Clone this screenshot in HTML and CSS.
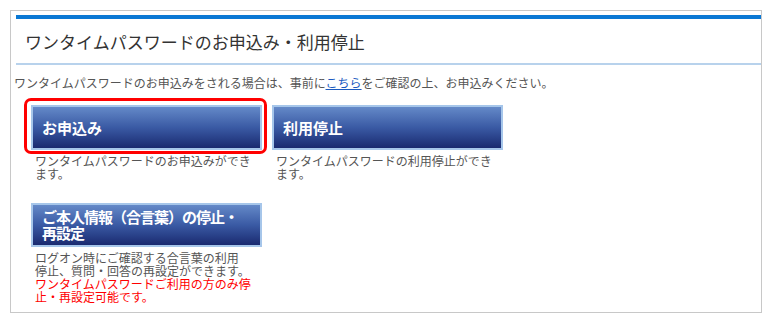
FILE: index.html
```html
<!DOCTYPE html>
<html lang="ja">
<head>
  <meta charset="UTF-8" />
  <title>ワンタイムパスワードのお申込み・利用停止</title>
  <link rel="stylesheet" href="styles.css">
</head>
<body>

<div class="panel">
  <div class="panel-head">
    <h2>ワンタイムパスワードのお申込み・利用停止</h2>
  </div>

  <p class="lead">ワンタイムパスワードのお申込みをされる場合は、事前に<a href="#">こちら</a>をご確認の上、お申込みください。</p>

  <div class="menu">
    <div class="menu-item">
      <a class="menu-btn selected" href="#">お申込み</a>
      <p class="menu-desc">ワンタイムパスワードのお申込みができます。</p>
    </div>
    <div class="menu-item">
      <a class="menu-btn" href="#">利用停止</a>
      <p class="menu-desc">ワンタイムパスワードの利用停止ができます。</p>
    </div>
    <div class="menu-item">
      <a class="menu-btn multi" href="#">ご本人情報（合言葉）の停止・<br>再設定</a>
      <p class="menu-desc">ログオン時にご確認する合言葉の利用<br>停止、質問・回答の再設定ができます。<span class="note">ワンタイムパスワードご利用の方のみ停<br>止・再設定可能です。</span></p>
    </div>
  </div>
</div>

</body>
</html>
```

FILE: styles.css
```css
body {
  margin: 0;
  font-family: "Noto Sans CJK JP", "Noto Sans", sans-serif;
  background: #fff;
  color: #333;
}
.panel {
  margin: 10px 0 0 10px;
  width: 752px;
  height: 303px;
  box-sizing: border-box;
  border: 1px solid #c8c8c8;
  padding: 4px 0 0 3px;
}
.panel-head {
  margin-left: 2px;
  height: 50px;
  box-sizing: border-box;
  border-top: 4px solid #0a78d4;
  border-bottom: 2px solid #b8d2ec;
  display: flex;
  align-items: center;
  padding-left: 9px;
}
.panel-head h2 {
  margin: 0;
  font-size: 17px;
  font-weight: normal;
  color: #333;
}
.lead {
  margin: 11px 0 0;
  font-size: 12px;
  line-height: 13px;
  color: #555;
}
.lead a {
  color: #1d5bbf;
}
.menu {
  margin: 16px 0 0 17px;
  display: grid;
  grid-template-columns: 231px 231px;
  column-gap: 10px;
  row-gap: 23px;
}
.menu-btn {
  display: flex;
  align-items: center;
  box-sizing: border-box;
  min-height: 45px;
  padding: 4px 9px;
  border: 2px solid #a6c6ea;
  background: linear-gradient(#6489c8, #3a5aa4 50%, #1a2a70);
  color: #fff;
  font-size: 15px;
  font-weight: bold;
  line-height: 16px;
  text-decoration: none;
  position: relative;
}
.menu-btn.multi {
  min-height: 44px;
  letter-spacing: -1px;
  white-space: nowrap;
}
.selected::before {
  content: "";
  position: absolute;
  top: -9px;
  left: -9px;
  right: -7px;
  bottom: -6px;
  border: 3px solid #f00;
  border-radius: 7px;
}
.menu-desc {
  margin: 4px 0 0;
  padding-left: 4px;
  width: 222px;
  min-height: 26px;
  font-size: 12px;
  line-height: 13px;
  color: #555;
}
.note {
  display: block;
  color: #f00;
}
```
